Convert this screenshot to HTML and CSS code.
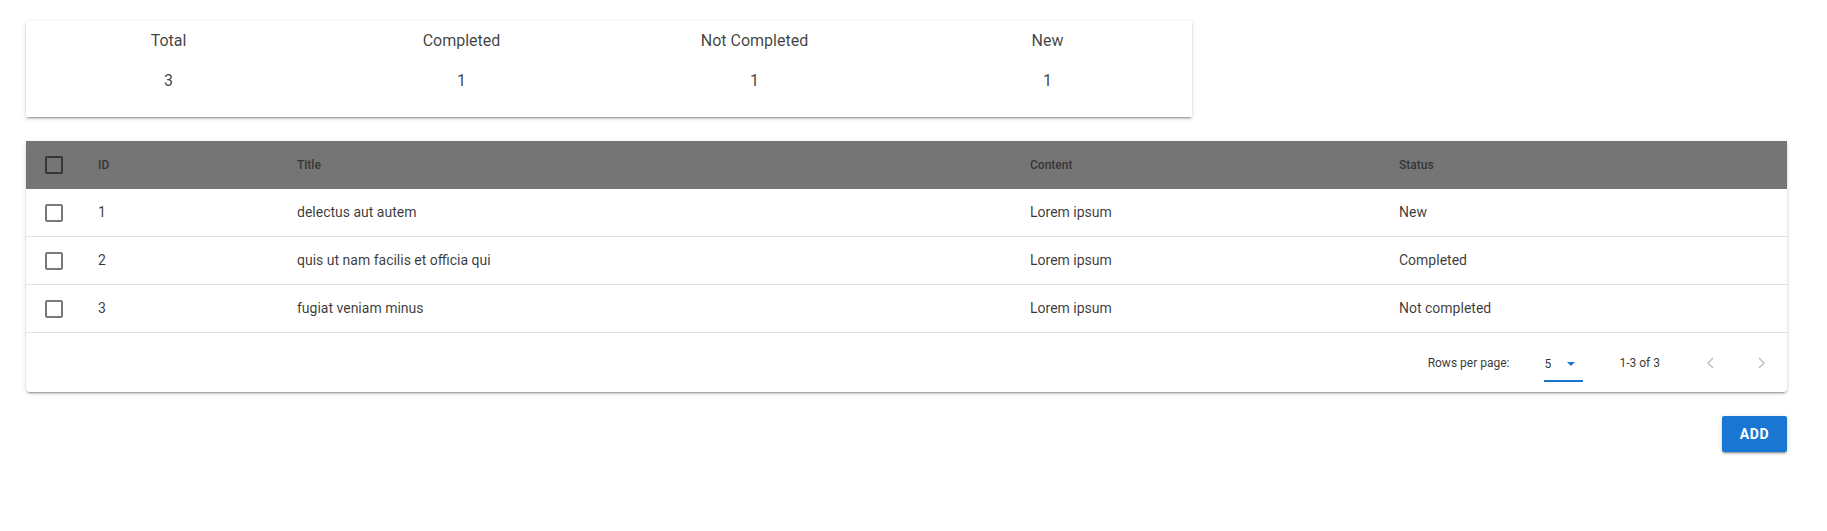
FILE: index.html
```html
<!DOCTYPE html>
<html lang="en">
<head>
<meta charset="utf-8">
<title>Todos</title>
<link rel="stylesheet" href="styles.css">
</head>
<body>
<div class="page">
  <section class="summary">
    <div class="stats">
      <div class="stat"><span>Total</span><span>3</span></div>
      <div class="stat"><span>Completed</span><span>1</span></div>
      <div class="stat"><span>Not Completed</span><span>1</span></div>
      <div class="stat"><span>New</span><span>1</span></div>
    </div>
  </section>

  <section class="table-card">
    <div class="row head">
      <div class="cell check"><span class="box dark"></span></div>
      <div class="cell">ID</div>
      <div class="cell">Title</div>
      <div class="cell">Content</div>
      <div class="cell">Status</div>
    </div>
    <div class="row">
      <div class="cell check"><span class="box"></span></div>
      <div class="cell">1</div>
      <div class="cell">delectus aut autem</div>
      <div class="cell">Lorem ipsum</div>
      <div class="cell">New</div>
    </div>
    <div class="row">
      <div class="cell check"><span class="box"></span></div>
      <div class="cell">2</div>
      <div class="cell">quis ut nam facilis et officia qui</div>
      <div class="cell">Lorem ipsum</div>
      <div class="cell">Completed</div>
    </div>
    <div class="row">
      <div class="cell check"><span class="box"></span></div>
      <div class="cell">3</div>
      <div class="cell">fugiat veniam minus</div>
      <div class="cell">Lorem ipsum</div>
      <div class="cell">Not completed</div>
    </div>
    <div class="pager">
      <span class="label">Rows per page:</span>
      <div class="select">
        <span class="value">5</span>
        <svg class="caret" width="8" height="4" viewBox="0 0 8 4"><polygon points="0,0 8,0 4,4" fill="#1976d2"/></svg>
      </div>
      <span class="range">1-3 of 3</span>
      <span class="nav prev"><svg width="10" height="12" viewBox="0 0 10 12"><polyline points="7,1 2,6 7,11" fill="none" stroke="#bdbdbd" stroke-width="1.4"/></svg></span>
      <span class="nav next"><svg width="10" height="12" viewBox="0 0 10 12"><polyline points="3,1 8,6 3,11" fill="none" stroke="#bdbdbd" stroke-width="1.4"/></svg></span>
    </div>
  </section>

  <div class="actions">
    <button class="add">ADD</button>
  </div>
</div>
</body>
</html>
```

FILE: styles.css
```css
* { box-sizing: border-box; }

body {
  margin: 0;
  background: #fff;
  font-family: Roboto, "Liberation Sans", Arial, sans-serif;
  color: rgba(0, 0, 0, 0.78);
}

.page {
  padding: 21px 40px 40px 26px;
}

.summary {
  width: 1166px;
  height: 96px;
  background: #fff;
  box-shadow: 0 3px 1px -2px rgba(0,0,0,0.2), 0 2px 2px 0 rgba(0,0,0,0.14), 0 1px 5px 0 rgba(0,0,0,0.12);
}

.stats {
  display: grid;
  grid-template-columns: repeat(4, 293px);
  margin-left: -4px;
}

.stat {
  display: flex;
  flex-direction: column;
  align-items: center;
  gap: 16px;
  padding-top: 8px;
  font-size: 16px;
  line-height: 24px;
  color: rgba(0, 0, 0, 0.75);
}

.table-card {
  margin-top: 24px;
  background: #fff;
  border-radius: 0 0 4px 4px;
  overflow: hidden;
  box-shadow: 0 3px 1px -2px rgba(0,0,0,0.2), 0 2px 2px 0 rgba(0,0,0,0.14), 0 1px 5px 0 rgba(0,0,0,0.12);
}

.row {
  display: grid;
  grid-template-columns: 72px 199px 733px 369px 1fr;
  align-items: center;
  height: 48px;
  border-bottom: 1px solid #e0e0e0;
  font-size: 14px;
}

.row.head {
  background: #757575;
  border-bottom: none;
  font-size: 12px;
  font-weight: 500;
  color: #363636;
}

.cell {
  white-space: nowrap;
  padding-bottom: 1px;
}

.check {
  padding-left: 19px;
  padding-bottom: 0;
  display: flex;
  align-items: center;
}

.box {
  display: block;
  width: 18px;
  height: 18px;
  border: 2px solid #7a7a7a;
  border-radius: 2px;
}

.box.dark {
  border-color: #363636;
}

.pager {
  height: 59px;
  display: flex;
  align-items: center;
  justify-content: flex-end;
  padding-right: 6px;
  font-size: 12px;
  color: rgba(0, 0, 0, 0.8);
}

.select {
  margin-left: 35px;
  width: 39px;
  display: flex;
  align-items: center;
  padding: 12px 0 8px 0;
  line-height: 16px;
  border-bottom: 2px solid #1976d2;
}

.value {
  width: 23px;
}

.caret {
  display: block;
}

.range {
  margin-left: 36px;
}

.nav {
  width: 40px;
  height: 40px;
  display: flex;
  align-items: center;
  justify-content: center;
}

.prev { margin-left: 31px; }
.next { margin-left: 10px; }

.actions {
  display: flex;
  justify-content: flex-end;
  margin-top: 24px;
}

.add {
  width: 65px;
  height: 36px;
  border: none;
  border-radius: 2px;
  background: #1976d2;
  color: #fff;
  font-family: Roboto, "Liberation Sans", Arial, sans-serif;
  font-size: 14px;
  font-weight: 700;
  letter-spacing: 0.04em;
  padding: 0;
  box-shadow: 0 3px 1px -2px rgba(0,0,0,0.2), 0 2px 2px 0 rgba(0,0,0,0.14), 0 1px 5px 0 rgba(0,0,0,0.12);
}
```
